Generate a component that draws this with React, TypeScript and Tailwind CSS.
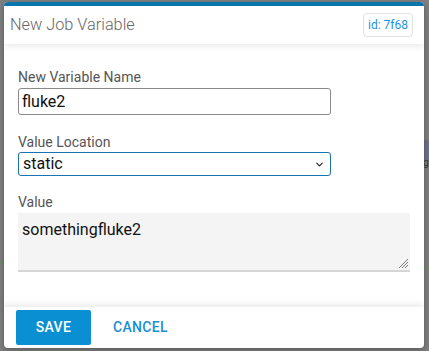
import { ChevronDown } from "lucide-react";

export default function App() {
  return (
    <div className="relative w-[429px] h-[351px] overflow-hidden bg-[#7f7f7f] font-['Roboto',sans-serif]">
      {/* faint app content behind the backdrop */}
      <div className="absolute right-0 top-[140px] w-[6px] h-[20px] bg-[#6e6f8a]" />
      <div className="absolute right-0 top-[155px] text-[11px] text-[#3a3a3a]">g</div>
      <div className="absolute left-0 top-[262px] w-[4px] h-px bg-[#5b9a5b]" />
      <div className="absolute right-0 top-[268px] w-[5px] h-px bg-[#5b9a5b]" />

      <div className="absolute left-[4px] top-[2px] w-[420px] h-[346px] rounded-[4px] bg-white overflow-hidden flex flex-col shadow-[0_2px_6px_rgba(0,0,0,0.3)]">
        <div className="h-[4px] bg-[#0b76ae] shrink-0" />
        <div className="h-[38px] shrink-0 flex items-center justify-between pl-[6px] pr-[11px] shadow-[0_3px_6px_rgba(0,0,0,0.08)] relative z-10">
          <span className="text-[16.3px] font-light text-[#666]">New Job Variable</span>
          <span className="h-[24px] px-[4px] flex items-center rounded-[4px] border border-[#e2e2e2] text-[12px] text-[#1d94df]">
            id: 7f68
          </span>
        </div>

        <div className="flex-1 px-[14px] pt-[25px]">
          <label className="block text-[14px] text-[#555] leading-[16px]">New Variable Name</label>
          <div className="mt-[3px] w-[313px] h-[27px] rounded-[3px] border border-[#8a8a8a] flex items-center px-[3px] text-[16px] text-[#111]">
            fluke2
          </div>

          <label className="block mt-[19px] text-[14px] text-[#555] leading-[16px]">Value Location</label>
          <div className="mt-[2px] w-[313px] h-[24px] rounded-[3px] border border-[#1a73b3] flex items-center justify-between pl-[4px] pr-[5px] text-[16px] text-[#111]">
            <span>static</span>
            <ChevronDown className="w-[11px] h-[11px] text-[#222]" strokeWidth={2.5} />
          </div>

          <label className="block mt-[18px] text-[14px] text-[#555] leading-[16px]">Value</label>
          <div className="relative mt-[3px] w-[392px] h-[59px] bg-[#f4f4f4] border-b-2 border-[#d6d6d6] px-[4px] pt-[7px] text-[16px] text-[#111] leading-[20px]">
            somethingfluke2
            <svg className="absolute right-[1px] bottom-[1px]" width="11" height="11" viewBox="0 0 11 11">
              <path d="M10 1L1 10M10 4L4 10M10 7L7 10" stroke="#777" strokeWidth="1" />
            </svg>
          </div>
        </div>

        <div className="h-[41px] shrink-0 flex items-center gap-[22px] pl-[12px] shadow-[0_-3px_6px_rgba(0,0,0,0.08)] relative z-10">
          <button className="w-[75px] h-[35px] rounded-[2px] bg-[#0a8fd3] text-white text-[14px] font-medium tracking-[0.3px]">
            SAVE
          </button>
          <button className="text-[#1a8fd3] text-[14px] font-medium tracking-[0.3px]">CANCEL</button>
        </div>
      </div>
    </div>
  );
}
